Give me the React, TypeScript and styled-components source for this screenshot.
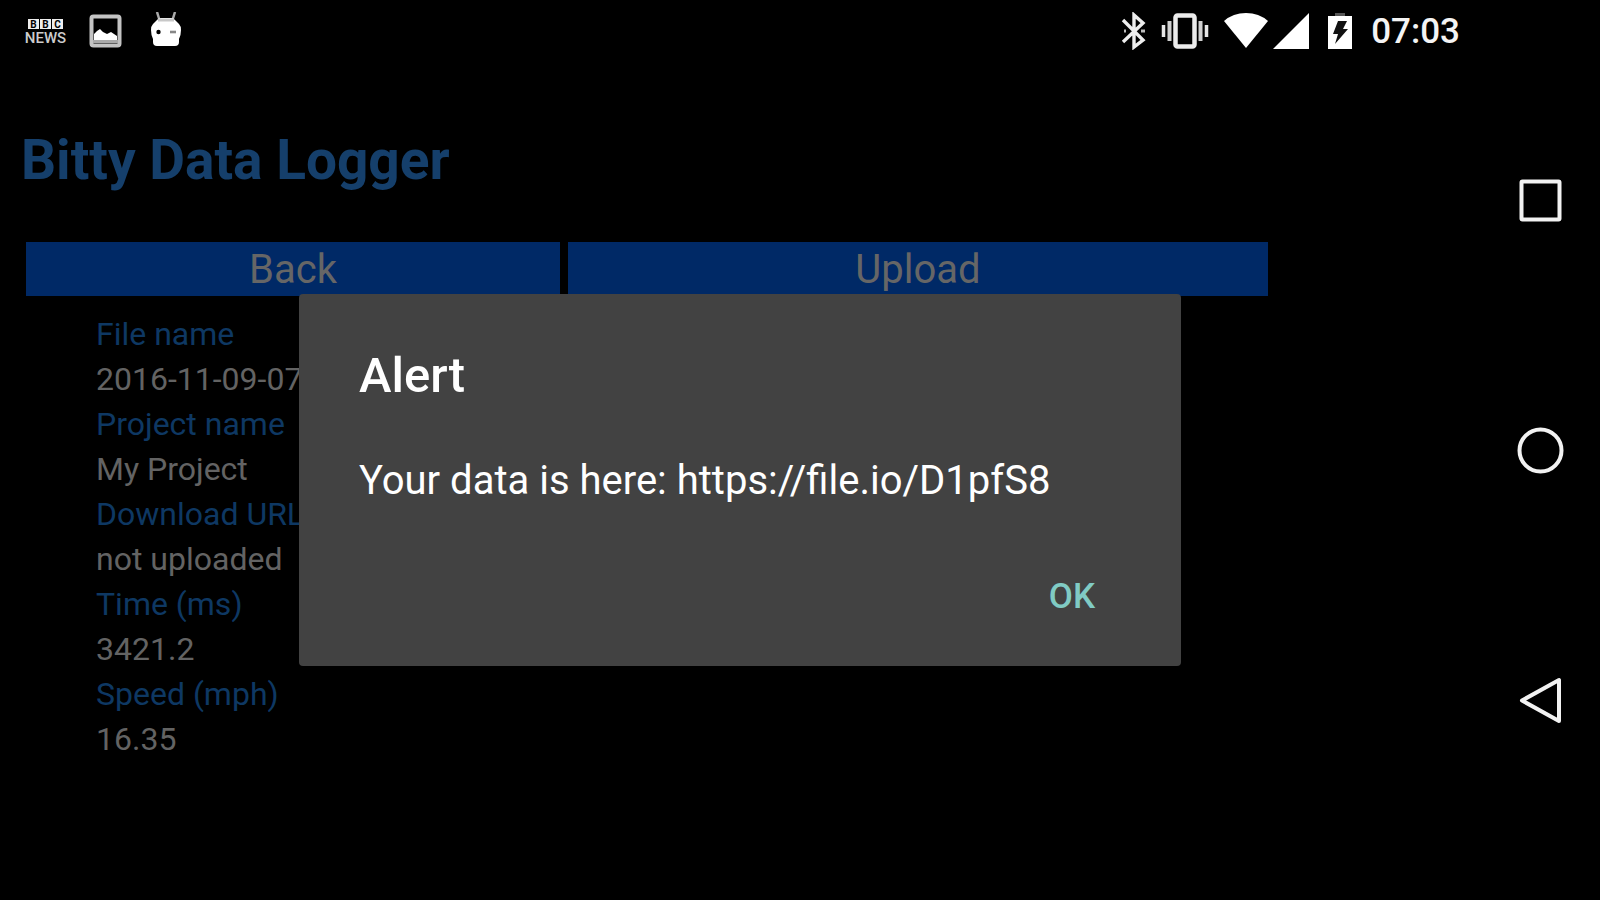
import React from "react";
import styled, { createGlobalStyle } from "styled-components";

const GlobalStyle = createGlobalStyle`
  *, *::before, *::after { box-sizing: border-box; }
  body {
    margin: 0;
    background: #000;
    font-family: Roboto, "Liberation Sans", sans-serif;
  }
  button { font-family: inherit; border: 0; cursor: pointer; }
  svg { display: block; flex: none; }
`;

const Device = styled.div`
  display: flex;
  min-height: 100vh;
  background: #000;
`;

const Screen = styled.div`
  flex: 1;
  min-width: 0;
  display: flex;
  flex-direction: column;
`;

const StatusBar = styled.header`
  height: 60px;
  display: flex;
  align-items: center;
  justify-content: space-between;
  padding: 2px 20px 0 20px;
  color: #fff;
`;

const StatusGroup = styled.div<{ $gap: number }>`
  display: flex;
  align-items: center;
  gap: ${({ $gap }) => $gap}px;
`;

const Clock = styled.time`
  margin-left: 15px;
  padding-top: 2px;
  font-size: 35px;
  line-height: 48px;
  font-weight: 500;
  color: #f4f4f4;
`;

const Content = styled.div`
  position: relative;
  flex: 1;
`;

const Page = styled.main`
  padding: 68px 212px 40px 26px;
`;

const Title = styled.h1`
  margin: 0 0 50px -5px;
  font-size: 55px;
  line-height: 64px;
  font-weight: 700;
  color: #153f6b;
`;

const Actions = styled.div`
  display: grid;
  grid-template-columns: 534fr 700fr;
  gap: 8px;
`;

const ActionButton = styled.button`
  height: 54px;
  padding: 2px 0 0;
  font-size: 40px;
  line-height: 52px;
  color: #666;
  background: #002966;
`;

const Details = styled.dl`
  margin: 16px 0 0;
  padding-left: 70px;
  font-size: 32px;
  line-height: 45px;
`;

const Label = styled.dt`
  color: #0e3863;
`;

const Value = styled.dd`
  margin: 0;
  color: #636363;
`;

const Overlay = styled.div`
  position: absolute;
  inset: 0;
  display: flex;
  align-items: center;
  justify-content: center;
`;

const Dialog = styled.section`
  width: 882px;
  max-width: 90%;
  padding: 54px 60px 45px;
  border-radius: 4px;
  background: #424242;
  color: #fff;
`;

const DialogTitle = styled.h2`
  margin: 0 0 53px;
  font-size: 49px;
  line-height: 56px;
  font-weight: 500;
`;

const DialogMessage = styled.p`
  margin: 0 0 68px;
  font-size: 40px;
  line-height: 48px;
`;

const DialogActions = styled.div`
  display: flex;
  justify-content: flex-end;
`;

const DialogButton = styled.button`
  padding: 0 26px;
  font-size: 35px;
  line-height: 48px;
  font-weight: 500;
  color: #80cbc4;
  background: transparent;
`;

const NavBar = styled.nav`
  flex: none;
  width: 120px;
  display: flex;
  flex-direction: column;
  align-items: center;
  justify-content: space-between;
  padding: 176px 0;
`;

const NavButton = styled.button`
  padding: 0;
  color: #f2f2f2;
  background: transparent;
`;

const BbcNewsIcon = () => (
  <svg width="52" height="36" viewBox="-4 -2 52 36" fill="#eee" fontFamily="Roboto, sans-serif">
    <rect x="4" y="4" width="11" height="10" />
    <rect x="16" y="4" width="11" height="10" />
    <rect x="28" y="4" width="11" height="10" />
    <g fill="#000" fontSize="10" fontWeight="700" textAnchor="middle">
      <text x="9.5" y="12.5">B</text>
      <text x="21.5" y="12.5">B</text>
      <text x="33.5" y="12.5">C</text>
    </g>
    <text x="21.5" y="28" fontSize="15" fontWeight="500" fill="#ccc" textAnchor="middle">NEWS</text>
  </svg>
);

const ImageIcon = () => (
  <svg width="34" height="34" viewBox="0 0 34 34">
    <rect x="2.5" y="2.5" width="28" height="29" rx="2" fill="none" stroke="#c4c4c4" strokeWidth="4" />
    <path d="M5 26V20L8 17L11 15L14 18L18 20L22 18L25 20L28 22V26Z" fill="#fff" />
    <path d="M4 27.5H29" stroke="#aaa" strokeWidth="3" />
  </svg>
);

const DroidIcon = () => (
  <svg width="32" height="38" viewBox="0 0 32 38">
    <path d="M7 0L9.5 8M25 0L22.5 8" stroke="#aaa" strokeWidth="2.5" />
    <path d="M7 8Q8 6 11 6H21Q24 6 25 8L29 12Q31 14 31 18Q31 23 29 27V30Q29 34 25 34H7Q3 34 3 30V27Q1 23 1 18Q1 14 3 12Z" fill="#fff" />
    <path d="M8 8H24" stroke="#c8c8c8" strokeWidth="3" />
    <circle cx="8.5" cy="20" r="2.2" fill="#000" />
    <path d="M20 20H26" stroke="#888" strokeWidth="2.6" />
  </svg>
);

const BluetoothIcon = () => (
  <svg width="26" height="38" viewBox="0 0 26 38" fill="none" stroke="#eee" strokeWidth="3.4">
    <path d="M2 8L22 28L13 35V3L22 11L2 30" />
    <path d="M3 19H5M20 19H24" strokeWidth="3" stroke="#bbb" />
  </svg>
);

const VibrateIcon = () => (
  <svg width="48" height="38" viewBox="0 0 48 38">
    <rect x="14.5" y="3.5" width="19" height="31" rx="2" fill="none" stroke="#ececec" strokeWidth="4.5" />
    <path d="M8.5 9V29M39.5 9V29" stroke="#d0d0d0" strokeWidth="4" />
    <path d="M2.5 13V25M45.5 13V25" stroke="#e6e6e6" strokeWidth="3.5" />
  </svg>
);

const WifiIcon = () => (
  <svg width="46" height="38" viewBox="0 0 46 38">
    <path d="M1 9Q10 1 23 1T45 9L23 36Z" fill="#fff" />
  </svg>
);

const SignalIcon = () => (
  <svg width="38" height="38" viewBox="0 0 38 38">
    <path d="M37 1V37H1Z" fill="#fff" />
  </svg>
);

const BatteryIcon = () => (
  <svg width="26" height="38" viewBox="0 0 26 38">
    <path d="M8 1H18V5H8Z" fill="#555" />
    <path d="M1 4H25V37H1Z" fill="#fff" />
    <path d="M11 9H20L16 17H21L8 32L11 22H6Z" fill="#111" />
  </svg>
);

const navItems = [
  { name: "Overview", shape: <rect x="5.5" y="5.5" width="38" height="38" rx="1" /> },
  { name: "Home", shape: <circle cx="24.5" cy="24.5" r="21" /> },
  { name: "Back", shape: <path d="M43 4V45L6 24.5Z" strokeLinejoin="round" /> },
];

const entries = [
  { label: "File name", value: "2016-11-09-07" },
  { label: "Project name", value: "My Project" },
  { label: "Download URL", value: "not uploaded" },
  { label: "Time (ms)", value: "3421.2" },
  { label: "Speed (mph)", value: "16.35" },
];

export default function App() {
  return (
    <>
      <GlobalStyle />
      <Device>
        <Screen>
          <StatusBar>
            <StatusGroup $gap={17}>
              <BbcNewsIcon />
              <StatusGroup $gap={27}>
                <ImageIcon />
                <DroidIcon />
              </StatusGroup>
            </StatusGroup>
            <StatusGroup $gap={3}>
              <StatusGroup $gap={14}>
                <BluetoothIcon />
                <VibrateIcon />
                <WifiIcon />
              </StatusGroup>
              <StatusGroup $gap={17}>
                <SignalIcon />
                <BatteryIcon />
              </StatusGroup>
              <Clock>07:03</Clock>
            </StatusGroup>
          </StatusBar>
          <Content>
            <Page>
              <Title>Bitty Data Logger</Title>
              <Actions>
                <ActionButton type="button">Back</ActionButton>
                <ActionButton type="button">Upload</ActionButton>
              </Actions>
              <Details>
                {entries.map(({ label, value }) => (
                  <React.Fragment key={label}>
                    <Label>{label}</Label>
                    <Value>{value}</Value>
                  </React.Fragment>
                ))}
              </Details>
            </Page>
            <Overlay>
              <Dialog role="alertdialog" aria-modal="true" aria-labelledby="alert-title" aria-describedby="alert-message">
                <DialogTitle id="alert-title">Alert</DialogTitle>
                <DialogMessage id="alert-message">Your data is here: https://file.io/D1pfS8</DialogMessage>
                <DialogActions>
                  <DialogButton type="button">OK</DialogButton>
                </DialogActions>
              </Dialog>
            </Overlay>
          </Content>
        </Screen>
        <NavBar aria-label="System navigation">
          {navItems.map(({ name, shape }) => (
            <NavButton key={name} type="button" aria-label={name}>
              <svg width="48" height="48" viewBox="0 0 48 48" fill="none" stroke="currentColor" strokeWidth="4">
                {shape}
              </svg>
            </NavButton>
          ))}
        </NavBar>
      </Device>
    </>
  );
}
